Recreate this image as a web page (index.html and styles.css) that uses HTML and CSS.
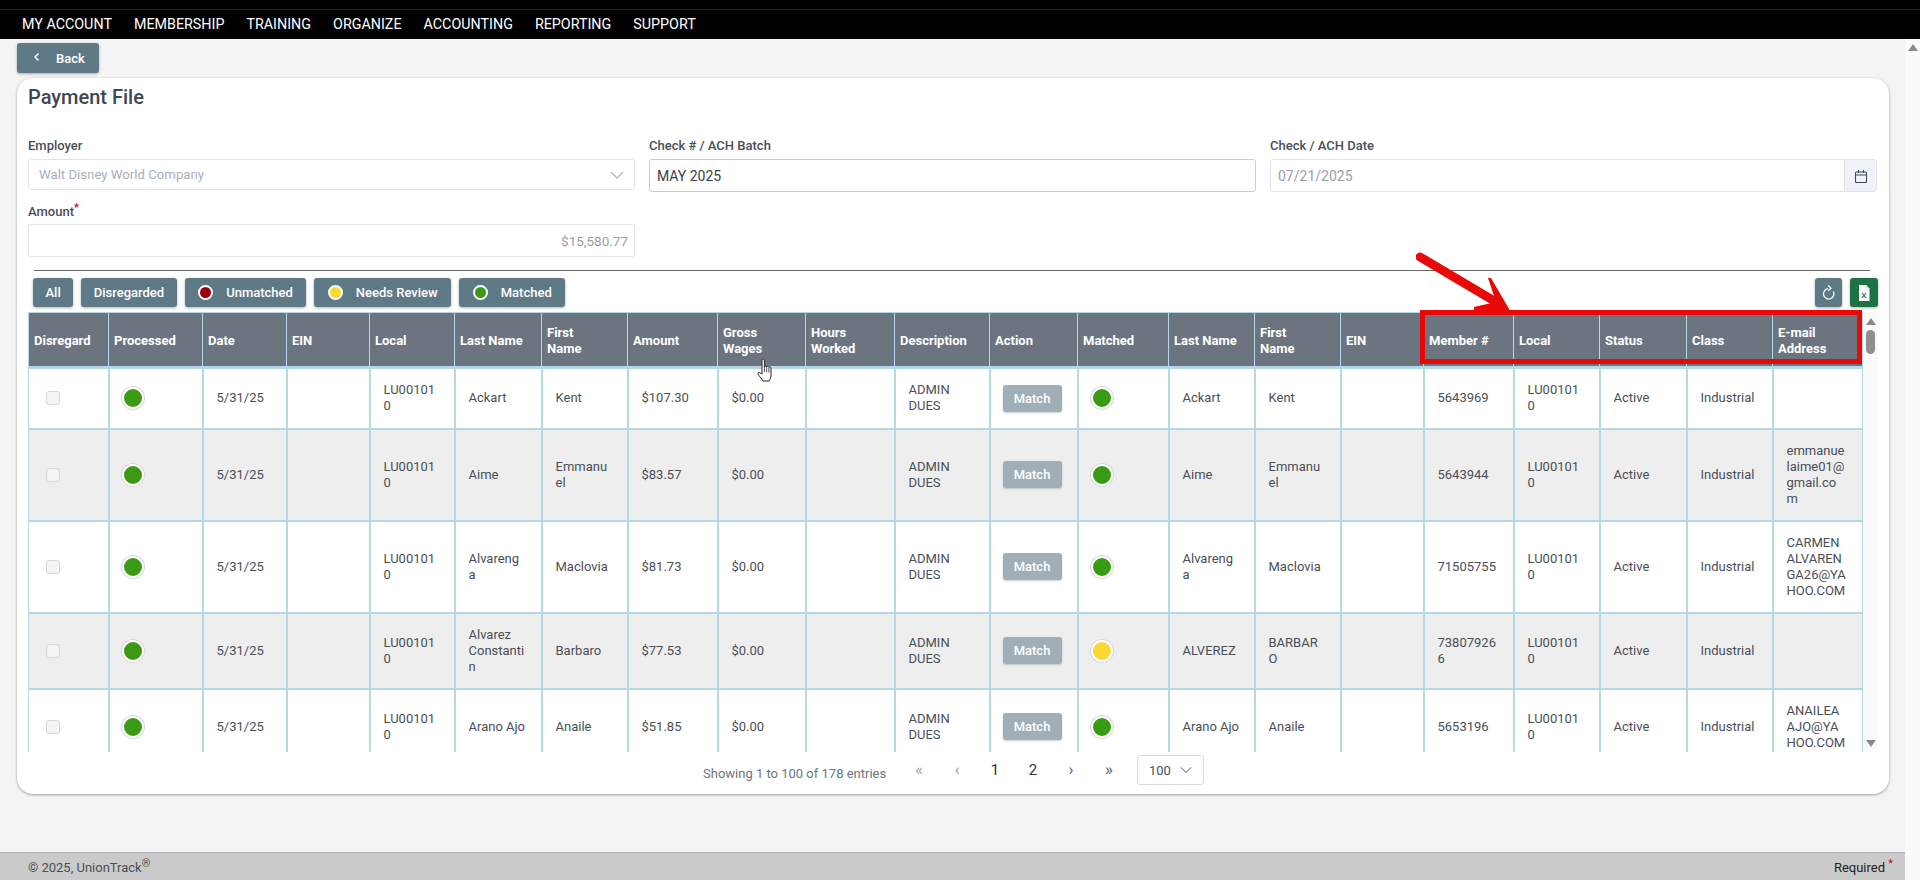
FILE: index.html
```html
<!DOCTYPE html>
<html lang="en">
<head>
<meta charset="utf-8">
<title>Payment File</title>
<link rel="stylesheet" href="styles.css">
</head>
<body>
<nav class="topnav">
  <a>My Account</a><a>Membership</a><a>Training</a><a>Organize</a><a>Accounting</a><a>Reporting</a><a>Support</a>
</nav>
<div class="shell">
  <main class="main">
    <div class="backrow">
      <button class="btn back"><svg class="chev" viewBox="0 0 10 10"><path d="M6.500 1.500 3 5l3.500 3.500" fill="none" stroke="#fff" stroke-width="1.500"/></svg><span>Back</span></button>
    </div>
    <section class="card">
      <h1 class="title">Payment File</h1>
      <div class="form">
        <div class="field">
          <label>Employer</label>
          <div class="control select disabled"><span>Walt Disney World Company</span><svg class="caret" viewBox="0 0 14 8"><path d="M1 1l6 6 6-6" fill="none" stroke="#aab2bd" stroke-width="1.200"/></svg></div>
        </div>
        <div class="field">
          <label>Check # / ACH Batch</label>
          <div class="control tall active">MAY 2025</div>
        </div>
        <div class="field">
          <label>Check / ACH Date</label>
          <div class="dategroup">
            <div class="control tall muted">07/21/2025</div>
            <span class="addon"><svg viewBox="0 0 14 14" width="14" height="14"><path d="M2.500 3h9a1 1 0 0 1 1 1v8.500a1 1 0 0 1-1 1h-9a1 1 0 0 1-1-1V4a1 1 0 0 1 1-1zM1.500 6h11M4.500 1v3M9.500 1v3" fill="none" stroke="#3f4b5b" stroke-width="1.100"/></svg></span>
          </div>
        </div>
        <div class="field amount">
          <label>Amount<sup class="req">*</sup></label>
          <div class="control tall muted right">$15,580.77</div>
        </div>
      </div>
      <hr class="rule">
      <div class="toolbar">
        <button class="btn">All</button>
        <button class="btn">Disregarded</button>
        <button class="btn withdot"><i class="dot small red"></i>Unmatched</button>
        <button class="btn withdot"><i class="dot small yellow"></i>Needs Review</button>
        <button class="btn withdot"><i class="dot small green"></i>Matched</button>
        <span class="spacer"></span>
        <button class="btn icon"><svg viewBox="0 0 14 18" width="14" height="18"><path d="M4.300 5.300A5.200 5.200 0 1 0 10.300 6.200" fill="none" stroke="#fff" stroke-width="1.200" transform="rotate(20 7 10)"/><path d="M6.200 1.500 9 4.200 6.200 6.800" fill="none" stroke="#fff" stroke-width="1.200"/></svg></button>
        <button class="btn icon xl"><svg viewBox="0 0 12 16" width="12" height="16"><path d="M1 0h7l3.500 3.500V16H1z" fill="#fff"/><path d="M8 0v3.500h3.500z" fill="#bfe0cc"/><path d="M4 8l4 5M8 8l-4 5" stroke="#1f7244" stroke-width="1.100"/></svg></button>
      </div>
      <div class="tablewrap">
        <table class="grid">
          <colgroup>
            <col class="c80"><col class="c94"><col class="c84"><col class="c83"><col class="c85"><col class="c87"><col class="c86"><col class="c90"><col class="c88"><col class="c89"><col class="c95"><col class="c88"><col class="c91"><col class="c86"><col class="c86"><col class="c83"><col class="c90"><col class="c86"><col class="c87"><col class="c86"><col class="c90">
          </colgroup>
          <thead>
            <tr><th>Disregard</th><th>Processed</th><th>Date</th><th>EIN</th><th>Local</th><th>Last Name</th><th>First<br>Name</th><th>Amount</th><th>Gross<br>Wages</th><th>Hours<br>Worked</th><th>Description</th><th>Action</th><th>Matched</th><th>Last Name</th><th>First<br>Name</th><th>EIN</th><th>Member #</th><th>Local</th><th>Status</th><th>Class</th><th>E-mail<br>Address</th></tr>
          </thead>
          <tbody>
            <tr><td class="ctl"><i class="check"></i></td><td class="ctl"><i class="dot green"></i></td><td>5/31/25</td><td></td><td>LU001010</td><td>Ackart</td><td>Kent</td><td>$107.30</td><td>$0.00</td><td></td><td>ADMIN DUES</td><td class="ctl"><button class="match">Match</button></td><td class="ctl"><i class="dot green"></i></td><td>Ackart</td><td>Kent</td><td></td><td>5643969</td><td>LU001010</td><td>Active</td><td>Industrial</td><td></td></tr>
            <tr><td class="ctl"><i class="check"></i></td><td class="ctl"><i class="dot green"></i></td><td>5/31/25</td><td></td><td>LU001010</td><td>Aime</td><td>Emmanuel</td><td>$83.57</td><td>$0.00</td><td></td><td>ADMIN DUES</td><td class="ctl"><button class="match">Match</button></td><td class="ctl"><i class="dot green"></i></td><td>Aime</td><td>Emmanuel</td><td></td><td>5643944</td><td>LU001010</td><td>Active</td><td>Industrial</td><td>emmanuelaime01@gmail.com</td></tr>
            <tr><td class="ctl"><i class="check"></i></td><td class="ctl"><i class="dot green"></i></td><td>5/31/25</td><td></td><td>LU001010</td><td>Alvarenga</td><td>Maclovia</td><td>$81.73</td><td>$0.00</td><td></td><td>ADMIN DUES</td><td class="ctl"><button class="match">Match</button></td><td class="ctl"><i class="dot green"></i></td><td>Alvarenga</td><td>Maclovia</td><td></td><td>71505755</td><td>LU001010</td><td>Active</td><td>Industrial</td><td>CARMENALVARENGA26@YAHOO.COM</td></tr>
            <tr><td class="ctl"><i class="check"></i></td><td class="ctl"><i class="dot green"></i></td><td>5/31/25</td><td></td><td>LU001010</td><td>Alvarez Constantin</td><td>Barbaro</td><td>$77.53</td><td>$0.00</td><td></td><td>ADMIN DUES</td><td class="ctl"><button class="match">Match</button></td><td class="ctl"><i class="dot yellow"></i></td><td>ALVEREZ</td><td>BARBARO</td><td></td><td>738079266</td><td>LU001010</td><td>Active</td><td>Industrial</td><td></td></tr>
            <tr><td class="ctl"><i class="check"></i></td><td class="ctl"><i class="dot green"></i></td><td>5/31/25</td><td></td><td>LU001010</td><td>Arano Ajo</td><td>Anaile</td><td>$51.85</td><td>$0.00</td><td></td><td>ADMIN DUES</td><td class="ctl"><button class="match">Match</button></td><td class="ctl"><i class="dot green"></i></td><td>Arano Ajo</td><td>Anaile</td><td></td><td>5653196</td><td>LU001010</td><td>Active</td><td>Industrial</td><td>ANAILEAAJO@YAHOO.COM</td></tr>
          </tbody>
        </table>
        <div class="vscroll">
          <i class="tri up"></i>
          <i class="thumb"></i>
          <span class="spacer"></span>
          <i class="tri down"></i>
        </div>
      </div>
      <div class="pager">
        <span class="info">Showing 1 to 100 of 178 entries</span>
        <a class="pg">«</a><a class="pg">‹</a><a class="pg num">1</a><a class="pg num">2</a><a class="pg dark">›</a><a class="pg dark">»</a>
        <div class="pagesize"><span>100</span><svg class="caret" viewBox="0 0 14 8"><path d="M1 1l6 6 6-6" fill="none" stroke="#7a8694" stroke-width="1.200"/></svg></div>
      </div>
    </section>
    <span class="spacer"></span>
    <footer class="footer">
      <span>© 2025, UnionTrack<sup class="reg">®</sup></span>
      <span class="required">Required <sup class="req">*</sup></span>
    </footer>
  </main>
  <aside class="pagescroll"><i class="tri up"></i></aside>
</div>

<div class="redbox"></div>
<svg class="arrow" viewBox="0 0 110 70" width="110" height="70">
  <path d="M4 5 L80 50" stroke="#e80808" stroke-width="9" stroke-linecap="round" fill="none"/>
  <path d="M72 26 L75 26 L96 62 L58 62 L58 55 L80 50 Z" fill="#e80808"/>
</svg>
<svg class="cursor" viewBox="0 0 18 26" width="18" height="26">
  <path d="M5 2c0-1.300 2.400-1.300 2.400 0v7c0-1 2.300-1 2.300 0 0-.8 2.200-.8 2.200.3 0-.7 2.100-.5 2.100.7v7c0 3-1 4-2 6H6c-1-2-4-5-5-7-.6-1.400.8-2.200 1.900-1.200L5 16z" fill="#fff" stroke="#222" stroke-width="1"/>
  <path d="M7.400 9v5M9.700 9.300v5M11.900 9.600v5" stroke="#222" stroke-width=".8"/>
</svg>
</body>
</html>
```
FILE: styles.css
```css
* { box-sizing: border-box; }
html, body { margin: 0; height: 880px; overflow: hidden; }
body {
  position: relative;
  display: flex;
  flex-direction: column;
  font-family: Roboto, "Liberation Sans", sans-serif;
  font-size: 13px;
  color: #4a4f57;
  background: #fafafa;
}
button { font-family: inherit; }
i { display: block; flex: none; }

.topnav {
  height: 39px;
  flex: none;
  display: flex;
  align-items: center;
  gap: 22px;
  padding: 9px 22px 0;
  background: linear-gradient(#000 9px, #222 9px, #222 10px, #000 10px);
}
.topnav a { color: #fff; font-size: 14.300px; text-transform: uppercase; line-height: 30px; }

.shell { flex: 1; display: flex; min-height: 0; }
.main { flex: 1; display: flex; flex-direction: column; background: #f4f4f4; min-width: 0; }
.pagescroll { width: 15px; flex: none; background: #fafafa; display: flex; flex-direction: column; align-items: center; padding-top: 5px; }
.spacer { flex: 1; }

.btn {
  height: 29px;
  border: 0;
  border-radius: 3px;
  background: #5f7a87;
  color: #fff;
  font-size: 13px;
  font-weight: 500;
  padding: 0 12.500px;
  display: inline-flex;
  align-items: center;
  box-shadow: 0 1px 3px rgba(0,0,0,.3);
}
.backrow { padding: 4px 0 5px 17px; flex: none; }
.back { height: 30px; width: 82px; padding: 0 0 0 15px; }
.chev { width: 10px; height: 10px; margin-right: 14px; margin-top: -2px; }

.card {
  margin-left: 17px;
  margin-right: 16px;
  height: 716px;
  flex: none;
  background: #fff;
  border-radius: 16px;
  box-shadow: 0 1px 3px rgba(0,0,0,.35);
  padding: 0 11px;
  display: flex;
  flex-direction: column;
}
.title { margin: 7px 0 0; font-size: 20px; line-height: 24px; font-weight: 500; color: #3f4550; height: 50px; flex: none; }

.form {
  display: grid;
  grid-template-columns: repeat(3, 607px);
  column-gap: 14px;
  row-gap: 13px;
  align-content: start;
  height: 135px;
  padding-top: 3px;
  flex: none;
}
.field label { display: block; font-size: 13px; font-weight: 500; line-height: 16px; height: 21px; color: #4a4f57; }
.field { height: 53px; }
.field.amount label { height: 20px; }
.req { color: #c00020; font-size: 11px; line-height: 0; }
.control {
  height: 31px;
  border: 1px solid #dfe3e8;
  border-radius: 3px;
  background: #fff;
  padding: 0 7px;
  display: flex;
  align-items: center;
  font-size: 14px;
  color: #4a4f57;
}
.control.tall { height: 33px; }
.control.active { border-color: #c8cdd3; color: #3a3f46; }
.control.muted { color: #9aa0a6; }
.control.right { justify-content: flex-end; padding-right: 6px; font-size: 13.500px; }
.select { justify-content: space-between; padding-left: 10px; padding-right: 10px; font-size: 13.200px; color: #a9b0bb; }
.caret { width: 14px; height: 8px; }
.dategroup { display: flex; }
.dategroup .control { flex: 1; border-radius: 3px 0 0 3px; }
.addon { width: 32px; height: 33px; background: #eff3f8; border: 1px solid #dfe3e8; border-left: 0; border-radius: 0 4px 4px 0; display: flex; align-items: center; justify-content: center; }

.rule { border: 0; height: 1px; background: #666; margin: 0 8px 0 6px; flex: none; }
.toolbar { display: flex; gap: 8px; padding: 7px 0 0 5px; height: 36px; margin-bottom: 5px; flex: none; }
.toolbar .btn.withdot { padding: 0 13.500px; }
.toolbar .btn .dot { margin-right: 13px; }
.toolbar .btn.icon { width: 27px; padding: 0; justify-content: center; }
.toolbar .btn.xl { width: 28px; background: #1f7244; }

.dot { width: 22px; height: 22px; border-radius: 50%; border: 2px solid #fff; box-shadow: 0 0 0 1px #d8d8d8; }
.dot.small { width: 15px; height: 15px; box-shadow: none; }
.green { background: #3a9a14; }
.yellow { background: #fdd835; }
.red { background: #9a0007; }

.tablewrap { display: flex; height: 440px; flex: none; overflow: hidden; }
.grid { width: 1834px; table-layout: fixed; border-collapse: collapse; flex: none; align-self: flex-start; }
.c80 { width: 80px; } .c83 { width: 83px; } .c84 { width: 84px; } .c85 { width: 85px; } .c86 { width: 86px; }
.c87 { width: 87px; } .c88 { width: 88px; } .c89 { width: 89px; } .c90 { width: 90px; } .c91 { width: 91px; }
.c94 { width: 94px; } .c95 { width: 95px; }
.grid th {
  height: 55px;
  background: #6c757f;
  color: #fff;
  text-align: left;
  font-size: 13px;
  font-weight: 700;
  line-height: 16px;
  padding: 2px 5px 0;
  border: 1px solid #b5d8e8;
  border-bottom: 3px solid #b5d8e8;
}
.grid td {
  height: 61px;
  padding: 13px 14px 13px 13px;
  line-height: 16px;
  font-size: 13px;
  color: #4a4f57;
  border: 2px solid #b5d8e8;
  overflow-wrap: anywhere;
  vertical-align: middle;
}
.grid td:nth-child(6) { padding-right: 15px; }
.grid td:last-child { padding-right: 15px; }
.grid td:first-child, .grid th:first-child { border-left-width: 1px; }
.grid td:last-child, .grid th:last-child { border-right-width: 1px; }
.grid tbody tr:nth-child(even) td { background: #eee; }
.grid td.ctl { padding: 0 0 0 12px; }
.grid td:first-child.ctl { padding-left: 17px; }
.check { width: 14px; height: 14px; border: 1px solid #d6d6d6; border-radius: 3px; background: #f5f5f5; }
.match {
  display: block;
  width: 59px;
  height: 27px;
  border: 0;
  border-radius: 3px;
  background: #a0afb7;
  color: #fff;
  font-size: 13px;
  font-weight: 500;
  box-shadow: 0 1px 2px rgba(0,0,0,.2);
}
.vscroll { width: 16px; background: #fafafa; display: flex; flex-direction: column; align-items: center; padding: 6px 0 5px; }
.thumb { width: 9px; height: 24px; margin-top: 5px; border-radius: 5px; background: #8f8f8f; }
.tri { width: 0; height: 0; border-left: 5px solid transparent; border-right: 5px solid transparent; }
.tri.up { border-bottom: 7px solid #8a8a8a; }
.tri.down { border-top: 7px solid #8a8a8a; }

.pager { display: flex; align-items: center; height: 32px; padding-left: 675px; flex: none; margin-top: 2px; }
.info { width: 197px; color: #6c757d; font-size: 13px; padding-top: 7px; }
.pg { width: 38px; text-align: center; color: #9aa3ad; font-size: 17px; margin-top: -3px; }
.pg.num { font-size: 15px; color: #333; margin-top: -1px; }
.pg.dark { color: #555f6b; }
.pagesize {
  width: 67px;
  height: 30px;
  margin-left: 9px;
  border: 1px solid #d9dee5;
  border-radius: 3px;
  display: flex;
  align-items: center;
  justify-content: space-between;
  padding: 0 11px;
  font-size: 13px;
  color: #4a4f57;
}
.pagesize .caret { width: 12px; }

.footer {
  height: 28px;
  flex: none;
  background: #cacaca;
  border-top: 1px solid #b0b0b0;
  display: flex;
  justify-content: space-between;
  align-items: center;
  padding: 2px 12px 0 28px;
  color: #4a4f57;
  font-size: 13px;
}
.reg { font-size: 11px; line-height: 0; }
.required { color: #222; }

/* annotations drawn over the screenshot */
.redbox { position: absolute; left: 1420px; top: 310px; width: 442px; height: 54px; border: 5px solid #e80808; }
.arrow { position: absolute; left: 1416px; top: 252px; }
.cursor { position: absolute; left: 757px; top: 358px; }
```
